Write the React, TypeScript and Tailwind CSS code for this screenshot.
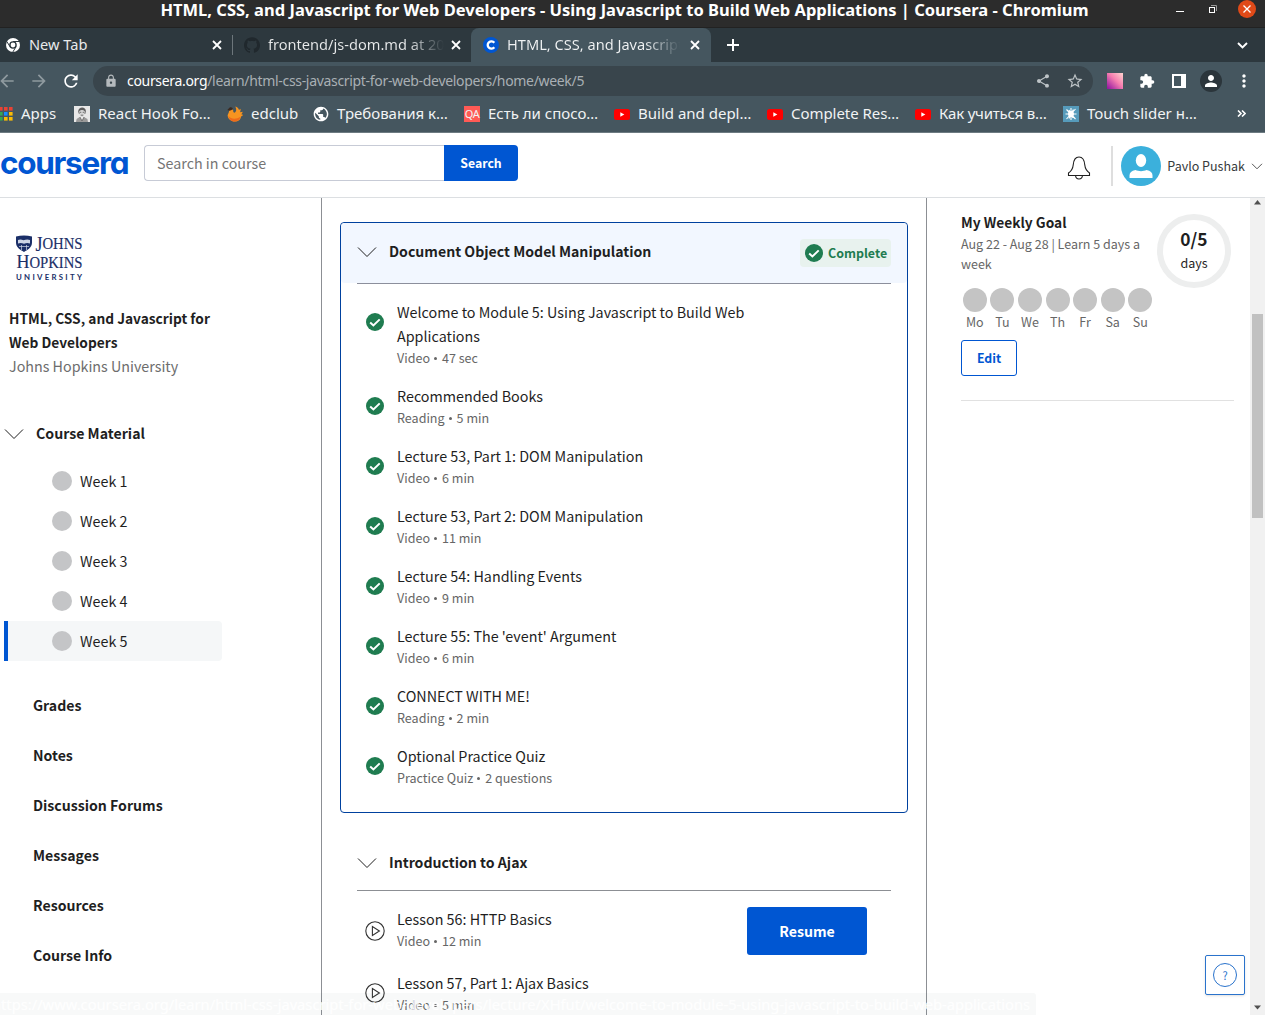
import type { ReactNode } from "react";
import { SiGithub } from "react-icons/si";
import {
  MdArrowBack,
  MdArrowForward,
  MdExtension,
  MdLock,
  MdMoreVert,
  MdPerson,
  MdPublic,
  MdRefresh,
  MdShare,
  MdStarOutline,
} from "react-icons/md";

const lessons = [
  { title: "Welcome to Module 5: Using Javascript to Build Web Applications", kind: "Video", length: "47 sec" },
  { title: "Recommended Books", kind: "Reading", length: "5 min" },
  { title: "Lecture 53, Part 1: DOM Manipulation", kind: "Video", length: "6 min" },
  { title: "Lecture 53, Part 2: DOM Manipulation", kind: "Video", length: "11 min" },
  { title: "Lecture 54: Handling Events", kind: "Video", length: "9 min" },
  { title: "Lecture 55: The 'event' Argument", kind: "Video", length: "6 min" },
  { title: "CONNECT WITH ME!", kind: "Reading", length: "2 min" },
  { title: "Optional Practice Quiz", kind: "Practice Quiz", length: "2 questions" },
];

const weeks = ["Week 1", "Week 2", "Week 3", "Week 4", "Week 5"];
const sections = ["Grades", "Notes", "Discussion Forums", "Messages", "Resources", "Course Info"];
const days = ["Mo", "Tu", "We", "Th", "Fr", "Sa", "Su"];

function CloseX() {
  return (
    <svg className="size-2.5 shrink-0" viewBox="0 0 10 10" stroke="#fff" strokeWidth="1.8">
      <path d="M1 1l8 8M9 1L1 9" />
    </svg>
  );
}

function Chevron({ className = "w-5 h-3" }: { className?: string }) {
  return (
    <svg className={`${className} shrink-0`} viewBox="0 0 20 12" fill="none" stroke="#1f1f1f" strokeWidth="1">
      <path d="M1 1.500l9 9 9-9" />
    </svg>
  );
}

function ChromeBall() {
  return (
    <svg className="size-[14px] shrink-0" viewBox="0 0 14 14">
      <circle cx="7" cy="7" r="7" fill="#fff" />
      <circle cx="7" cy="7" r="3.100" fill="#fff" stroke="#2d383e" strokeWidth="1.400" />
      <path d="M7 3.500h6.500M4 8.700L.8 3.500M10 8.800L6.800 14" stroke="#2d383e" strokeWidth="1" />
    </svg>
  );
}

function CheckBadge() {
  return (
    <svg className="size-[18px] shrink-0" viewBox="0 0 18 18">
      <circle cx="9" cy="9" r="9" fill="#1f7c50" />
      <path d="M4.2 9.4l3.2 3 6.3-6" fill="none" stroke="#fff" strokeWidth="2" />
    </svg>
  );
}

function PlayCircle() {
  return (
    <svg className="size-5 shrink-0" viewBox="0 0 20 20" fill="none" stroke="#333" strokeWidth="1.1">
      <circle cx="10" cy="10" r="9.2" />
      <path d="M7.4 5.5v9l7-4.5z" />
    </svg>
  );
}

function YouTube() {
  return (
    <svg className="h-[11px] w-4" viewBox="0 0 16 11">
      <rect width="16" height="11" rx="2.5" fill="#f00" />
      <path d="M6.3 3.2v4.6l4-2.3z" fill="#fff" />
    </svg>
  );
}

function AppsGrid() {
  const colors = ["#ea4335", "#ea4335", "#ea4335", "#34a853", "#1a8cff", "#fbbc04", "#34a853", "#fbbc04", "#fbbc04"];
  return (
    <svg className="h-[14px] w-[14px]" viewBox="0 0 14 14">
      {colors.map((c, i) => (
        <rect key={i} x={(i % 3) * 5} y={Math.floor(i / 3) * 5} width="3.6" height="3.6" fill={c} />
      ))}
    </svg>
  );
}

function Portrait() {
  return (
    <svg className="size-4" viewBox="0 0 16 16">
      <rect width="16" height="16" fill="#e8e8e8" />
      <path d="M4.300 6c-1-5.500 8-6.500 7.500-.5l-.6 2.500H5z" fill="#5c5c5c" />
      <path d="M5.200 5c2-1.500 4-1.500 5.600.3 0 3-1 5.700-2.800 5.700S5.200 8 5.200 5z" fill="#d8d8d8" />
      <path d="M2 16l.6-3 3-2 2.400 1.500 2-1.500 3.400 2 .6 3z" fill="#9a9a9a" />
      <path d="M5.800 6.300h1.500M8.700 6.300h1.500M6.800 9.200h2.400" stroke="#444" strokeWidth=".7" />
      <path d="M6 11l2 4 2-4" stroke="#555" fill="#eee" strokeWidth=".7" />
    </svg>
  );
}

function Phoenix() {
  return (
    <svg className="size-4" viewBox="0 0 16 16">
      <path
        d="M2 4.500L4.500 3c1.500 0 2 1.500 1.800 3l1 .7C9 6 10 4 8.300.5c2 .5 3.200 1.700 3.700 3.500l1.500-1.200c.2 1.500 0 2.500-.5 3.500l2.700-.6c-.3 1.300-.8 2-1.500 2.600l1.800.5c-.5 1-1.200 1.500-2 1.700 0 3-3 5-6 5-4 0-7-2.500-7.400-6C.8 7.500 2.500 6.500 2 4.500z"
        fill="#f79420"
      />
      <path d="M1.500 10c2.500 3.500 8 3.500 12 .8-.5 3-3.500 4.700-6 4.700-3 0-5.500-2-6-5.500z" fill="#ee6a1b" />
      <path d="M.3 4L3 1.300c1.400-.5 2.800.2 2.900 1.900L4 4.300l-1.500.5z" fill="#3b2a20" />
    </svg>
  );
}

function Splat() {
  return (
    <svg className="size-4" viewBox="0 0 16 16">
      <rect width="16" height="16" fill="#569bbb" />
      <circle cx="8" cy="8" r="3" fill="#fff" />
      <path
        d="M8 2v12M2.500 8h11M3.500 3.500l9 9.500M12.500 3l-9 10M6 4l4 8M10.400 3.500L6 12.500"
        stroke="#fff"
        strokeWidth="1.100"
      />
    </svg>
  );
}

function Bookmark({ icon, label, className = "" }: { icon: ReactNode; label: string; className?: string }) {
  return (
    <div className={`flex shrink-0 items-center gap-2 ${className}`}>
      <span className="flex translate-y-px">{icon}</span>
      <span>{label}</span>
    </div>
  );
}

function BrowserChrome() {
  return (
    <div className="shrink-0 font-['Noto_Sans',sans-serif] text-white">
      <div className="relative flex h-[28px] items-start justify-center border-b border-[#222] bg-[#2c2c2c]">
        <span className="-ml-4 whitespace-nowrap text-[16.5px] font-bold leading-[20px]">
          HTML, CSS, and Javascript for Web Developers - Using Javascript to Build Web Applications | Coursera - Chromium
        </span>
        <div className="absolute right-[9px] top-0 flex h-[18px] items-center gap-[25px]">
          <div className="mt-[5px] h-px w-2 bg-white" />
          <svg className="size-2" viewBox="0 0 8 8" fill="none">
            <path d="M2 .5h5.500V6" stroke="#999" />
            <rect x=".5" y="2.500" width="5" height="5" stroke="#fff" />
          </svg>
          <svg className="-ml-[4px] size-[18px]" viewBox="0 0 18 18">
            <circle cx="9" cy="9" r="9" fill="#e04a18" />
            <path d="M5.500 5.500l7 7M12.500 5.500l-7 7" stroke="#fff" strokeWidth="1.300" />
          </svg>
        </div>
      </div>

      <div className="flex h-[34px] items-center bg-[#2d383e] text-[14.6px] text-[#e8eaeb]">
        <div className="flex h-full w-[232px] items-center pl-[6px] pr-[10px]">
          <ChromeBall />
          <span className="ml-[9px] flex-1">New Tab</span>
          <CloseX />
        </div>
        <div className="h-5 w-px bg-[#6d767b]" />
        <div className="flex h-full w-[238px] items-center pl-[11px] pr-[10px]">
          <SiGithub className="size-4 shrink-0 text-[#20282d]" />
          <span className="ml-2 w-[176px] flex-1 overflow-hidden whitespace-nowrap bg-linear-to-r from-[#e8eaeb] from-80% to-[#2d383e] bg-clip-text text-transparent">
            frontend/js-dom.md at 20
          </span>
          <span className="ml-[7px] flex">
            <CloseX />
          </span>
        </div>
        <div className="flex h-full w-[240px] items-center rounded-t-lg bg-[#45565f] pl-[12px] pr-[11px]">
          <svg className="size-4 shrink-0" viewBox="0 0 16 16">
            <circle cx="8" cy="8" r="8" fill="#0056d2" />
            <path d="M11.300 5.700A3.700 3.700 0 1 0 11.300 10.300" fill="none" stroke="#fff" strokeWidth="2.300" />
          </svg>
          <span className="ml-2 flex-1 overflow-hidden whitespace-nowrap bg-linear-to-r from-[#f1f3f4] from-80% to-[#45565f] bg-clip-text text-transparent">
            HTML, CSS, and Javascript
          </span>
          <span className="ml-[10px] flex">
            <CloseX />
          </span>
        </div>
        <svg className="ml-4 size-3" viewBox="0 0 12 12" stroke="#fff" strokeWidth="2">
          <path d="M6 0v12M0 6h12" />
        </svg>
        <svg className="ml-auto mr-[17px] h-[7px] w-[11px]" viewBox="0 0 11 7" fill="none" stroke="#fff" strokeWidth="1.900">
          <path d="M1 1l4.500 4.500L10 1" />
        </svg>
      </div>

      <div className="flex h-[38px] items-center bg-[#45565f]">
        <MdArrowBack className="-ml-[3px] size-5 text-[#8f9a9f]" />
        <MdArrowForward className="ml-3 size-5 text-[#8f9a9f]" />
        <MdRefresh className="ml-3 size-5 text-white" />
        <div className="ml-[12px] flex h-[30px] w-[1000px] items-center rounded-full bg-[#39454c] pl-[11px] pr-[9px]">
          <MdLock className="size-[14px] text-[#b5babd]" />
          <span className="-mt-[2px] ml-[9px] text-[14px] tracking-[-0.32px] text-[#a9b0b4]">
            <span className="text-white">coursera.org</span>/learn/html-css-javascript-for-web-developers/home/week/5
          </span>
          <MdShare className="ml-auto size-4 text-[#bdc3c6]" />
          <MdStarOutline className="ml-[15px] size-[18px] text-[#bdc3c6]" />
        </div>
        <div className="ml-[14px] size-4 bg-[linear-gradient(45deg,#8d10a0,#f77fb0_55%,#ffd5cf)]" />
        <MdExtension className="ml-4 size-4 text-white" />
        <svg className="ml-[17px] size-[14px]" viewBox="0 0 14 14">
          <path d="M0 0h14v14H0zM2 2v10h7V2z" fill="#fff" fillRule="evenodd" />
        </svg>
        <div className="ml-[14px] flex size-[22px] items-center justify-center rounded-full bg-[#2b353b]">
          <MdPerson className="size-[18px] text-white" />
        </div>
        <MdMoreVert className="ml-[12px] size-5 text-white" />
      </div>

      <div className="flex h-[33px] items-center overflow-hidden border-b border-[#6d7b82] bg-[#45565f] pb-[6px] text-[15px] text-[#f1f3f4]">
        <Bookmark className="w-[74px]" icon={<span className="-ml-px flex"><AppsGrid /></span>} label="Apps" />
        <Bookmark className="w-[153px]" icon={<Portrait />} label="React Hook Fo…" />
        <Bookmark className="w-[86px]" icon={<Phoenix />} label="edclub" />
        <Bookmark className="w-[151px]" icon={<MdPublic className="size-4 scale-110 text-white" />} label="Требования к…" />
        <Bookmark
          className="w-[150px]"
          icon={<span className="w-4 bg-[#ff5a55] text-center text-[11px] leading-4 tracking-tighter">QA</span>}
          label="Есть ли спосо…"
        />
        <Bookmark className="w-[153px]" icon={<YouTube />} label="Build and depl…" />
        <Bookmark className="w-[148px] tracking-[-0.05px]" icon={<YouTube />} label="Complete Res…" />
        <Bookmark className="w-[148px] tracking-[-0.2px]" icon={<YouTube />} label="Как учиться в…" />
        <Bookmark className="w-[170px]" icon={<Splat />} label="Touch slider н…" />
        <svg className="ml-[4px] h-[7px] w-[9px]" viewBox="0 0 9 7" fill="none" stroke="#fff" strokeWidth="1.600">
          <path d="M1 .5l3 3-3 3M5 .5l3 3-3 3" />
        </svg>
      </div>
    </div>
  );
}

function SiteHeader() {
  return (
    <header className="flex h-[65px] shrink-0 items-center border-b border-[#dcdfe2] bg-white">
      <span className="-mt-[5px] w-[144px] whitespace-nowrap font-[Inter] text-[31.5px] font-bold leading-none tracking-[-1.3px] text-[#0056d2] [font-feature-settings:'cv11']">
        coursera
      </span>
      <div className="-mt-1 flex h-9 w-[374px]">
        <div className="flex flex-1 items-center rounded-l border border-r-0 border-[#c7cbd6] pl-3 text-[14.3px] text-[#757575]">
          Search in course
        </div>
        <button className="w-[74px] rounded-r bg-[#0056d2] text-[12.3px] font-bold text-white">Search</button>
      </div>
      <svg className="ml-auto mt-[5px] h-6 w-6" viewBox="0 0 24 24" fill="none" stroke="#1f1f1f" strokeWidth="1.100">
        <path d="M1.500 19.500v-2.500c3-2 4.300-4 4.700-8 .4-5 2-8 5.800-8s5.400 3 5.800 8c.4 4 1.700 6 4.700 8v2.500zM8.500 19.500c.5 4.600 6.500 4.600 7 0" />
      </svg>
      <div className="ml-5 mr-2 mt-[2px] h-10 w-[2px] bg-[#dedede]" />
      <svg className="mt-[2px] size-10" viewBox="0 0 40 40">
        <circle cx="20" cy="20" r="20" fill="#3bb0dc" />
        <ellipse cx="20" cy="14.500" rx="5.200" ry="6.500" fill="#fff" />
        <path d="M8.500 32v-2.500c0-3 2-4.500 6-5.500 3 1.500 8 1.500 11 0 4 1 6 2.500 6 5.500V32z" fill="#fff" />
      </svg>
      <span className="ml-[6px] mt-[2px] whitespace-nowrap text-[12.5px] text-[#373a3c]">Pavlo Pushak</span>
      <svg className="ml-[6px] mr-[2px] mt-[3px] h-[7px] w-3 shrink-0" viewBox="0 0 12 7" fill="none" stroke="#444" strokeWidth="0.900">
        <path d="M1 .8l5 5 5-5" />
      </svg>
    </header>
  );
}

function CourseNav() {
  return (
    <aside className="flex w-[322px] shrink-0 flex-col border-r border-[#8c8f94] bg-white">
      <svg className="ml-[15px] mt-9 h-12 w-[70px]" viewBox="0 0 70 48" fill="#1b2f68">
        <path d="M1 2.500q8-2 16 0v6c0 5-4 7-8 9.500-4-2.500-8-4.500-8-9.500z" />
        <path d="M3 6q2.500-1 5.500.3Q12 5 15 6v3.500q-3-1-6 .3-3-1.300-6-.3z" fill="#cdd5e6" />
        <path d="M4 12.500h10M6.500 11v5M11.500 11v5" stroke="#cdd5e6" strokeWidth=".7" />
        <g fontFamily="Liberation Serif, serif" stroke="#1b2f68" strokeWidth=".15">
          <text x="20.500" y="17" fontSize="20" textLength="7" lengthAdjust="spacingAndGlyphs">J</text>
          <text x="27.500" y="15" fontSize="16" textLength="40" lengthAdjust="spacingAndGlyphs">OHNS</text>
          <text x="1.500" y="34" fontSize="19.500" textLength="13" lengthAdjust="spacingAndGlyphs">H</text>
          <text x="14.500" y="34" fontSize="16" textLength="53" lengthAdjust="spacingAndGlyphs">OPKINS</text>
        </g>
        <text x="1" y="45.700" fontFamily="Lato, sans-serif" fontWeight="700" fontSize="7.800" textLength="66">UNIVERSITY</text>
      </svg>
      <div className="ml-[9px] mt-[24px] w-[215px] leading-6">
        <h1 className="text-[13.74px] font-semibold">HTML, CSS, and Javascript for Web Developers</h1>
        <p className="text-[14.3px] text-[#6d6d6d]">Johns Hopkins University</p>
      </div>
      <div className="mt-[44px] flex h-6 items-center gap-3 pl-1">
        <Chevron />
        <span className="text-[14.15px] font-bold">Course Material</span>
      </div>
      <ul className="ml-1 mt-[15px] w-[218px] text-[14.3px]">
        {weeks.map((week) => (
          <li
            key={week}
            className={
              week === "Week 5"
                ? "flex h-10 items-center gap-2 rounded-r border-l-4 border-[#0056d2] bg-[#f5f7f8] pl-11"
                : "flex h-10 items-center gap-2 pl-12"
            }
          >
            <span className="size-5 rounded-full bg-[#c4c5c7]" />
            {week}
          </li>
        ))}
      </ul>
      <ul className="ml-[33px] mt-5 text-[14.12px] font-bold">
        {sections.map((section) => (
          <li key={section} className="flex h-[50px] items-center">
            {section}
          </li>
        ))}
      </ul>
    </aside>
  );
}

function Meta({ kind, length }: { kind: string; length: string }) {
  return (
    <div className="flex h-5 items-center text-[12.55px] text-[#666]">
      {kind}
      <span className="ml-[4px] mr-[5px] mt-px size-[3px] rounded-full bg-[#666]" />
      {length}
    </div>
  );
}

function SectionTitle({ children }: { children: string }) {
  return (
    <div className="flex items-center gap-3">
      <span className="flex translate-y-px">
        <Chevron />
      </span>
      <h2 className="text-[14.12px] font-bold leading-6">{children}</h2>
    </div>
  );
}

function Lessons() {
  return (
    <main className="flex w-[605px] shrink-0 flex-col border-r border-[#8c8f94] bg-white pl-[18px] pr-[18px] pt-6">
      <section className="h-[591px] shrink-0 rounded border border-[#00419e]">
        <div className="flex h-[60px] items-center justify-between rounded bg-[#f2f7ff] px-4">
          <div className="-mt-[4px]">
            <SectionTitle>Document Object Model Manipulation</SectionTitle>
          </div>
          <div className="flex h-7 w-[91px] items-center gap-[5px] rounded bg-[#e8f2ee] pl-[5px] text-[12.45px] font-bold text-[#1f7c50]">
            <CheckBadge />
            Complete
          </div>
        </div>
        <div className="mx-4 h-px bg-[#8c8f9c]" />
        <ul className="flex flex-col gap-4 pl-[25px] pt-4">
          {lessons.map((l) => (
            <li key={l.title} className="flex gap-[13px]">
              <span className="mt-[13px]">
                <CheckBadge />
              </span>
              <div className="w-[370px]">
                <div className="text-[14.33px] leading-6">{l.title}</div>
                <Meta kind={l.kind} length={l.length} />
              </div>
            </li>
          ))}
        </ul>
      </section>
      <section className="mx-[17px] mt-[37px]">
        <SectionTitle>Introduction to Ajax</SectionTitle>
        <div className="mt-4 h-px bg-[#8c8f94]" />
        <ul className="pl-2 pt-4">
          <li className="flex h-16">
            <span className="mr-3 mt-[14px]">
              <PlayCircle />
            </span>
            <div className="flex-1">
              <div className="text-[14.33px] leading-6">Lesson 56: HTTP Basics</div>
              <Meta kind="Video" length="12 min" />
            </div>
            <button className="mr-6 h-12 w-[120px] rounded-[3px] bg-[#0056d2] pt-[2px] text-[14.15px] font-bold text-white">Resume</button>
          </li>
          <li className="flex">
            <span className="mr-3 mt-3">
              <PlayCircle />
            </span>
            <div>
              <div className="text-[14.33px] leading-6">Lesson 57, Part 1: Ajax Basics</div>
              <Meta kind="Video" length="5 min" />
            </div>
          </li>
        </ul>
      </section>
    </main>
  );
}

function GoalPanel() {
  return (
    <aside className="relative flex min-w-0 flex-1 flex-col bg-white pl-[34px] pr-4">
      <div className="flex justify-between border-b border-[#e1e1e1] pb-6 pt-[14px]">
        <div className="w-[194px]">
          <h3 className="text-[13.74px] font-semibold leading-5">My Weekly Goal</h3>
          <p className="mt-[2px] text-[12.5px] leading-5 text-[#666]">Aug 22 - Aug 28 | Learn 5 days a week</p>
          <div className="mt-[14px] flex w-[193px]">
            {days.map((d) => (
              <div key={d} className="flex flex-1 flex-col items-center text-[12.5px] leading-5 text-[#666]">
                <span className="size-6 rounded-full bg-[#c4c4c4]" />
                {d}
              </div>
            ))}
          </div>
          <button className="mt-[8px] block h-9 w-14 rounded-[3px] border border-[#0056d2] text-[12.3px] font-bold text-[#0056d2]">
            Edit
          </button>
        </div>
        <div className="mr-[3px] mt-[2px] flex size-[74px] shrink-0 flex-col items-center justify-center rounded-full border-[6px] border-[#edeeee] leading-6">
          <span className="text-[17.4px] font-semibold">0/5</span>
          <span className="text-[12.5px]">days</span>
        </div>
      </div>
      <button className="absolute bottom-5 right-[5px] flex size-10 items-center justify-center rounded-[2px] border border-[#2a73cc] bg-white shadow-sm">
        <span className="flex size-6 items-center justify-center rounded-full border border-[#2a73cc] text-[11px] leading-none text-[#2a73cc]">
          ?
        </span>
      </button>
    </aside>
  );
}

function Scrollbar() {
  return (
    <div className="flex w-[15px] shrink-0 flex-col items-center bg-[#f1f1f1]">
      <svg className="mt-[2px] h-[5px] w-[7px]" viewBox="0 0 7 5">
        <path d="M0 4.500L3.500 0 7 4.500z" fill="#505050" />
      </svg>
      <div className="mt-[109px] h-[204px] w-[11px] bg-[#c1c1c1]" />
      <svg className="mb-[5px] mt-auto h-[5px] w-[7px]" viewBox="0 0 7 5">
        <path d="M0 .5h7L3.500 4.500z" fill="#505050" />
      </svg>
    </div>
  );
}

export default function App() {
  return (
    <div className="relative flex h-[1015px] w-[1265px] flex-col overflow-hidden bg-white font-['Noto_Sans_CJK_SC',sans-serif] text-[#1f1f1f]">
      <BrowserChrome />
      <SiteHeader />
      <div className="flex min-h-0 flex-1 overflow-hidden">
        <CourseNav />
        <Lessons />
        <GoalPanel />
        <Scrollbar />
      </div>
      <div className="absolute bottom-0 left-0 flex h-[22px] w-[1036px] items-center justify-end overflow-hidden rounded-tr-[3px] bg-[#45605a]/4 pr-[6px] font-['Noto_Sans',sans-serif] text-[14.7px] text-white/90">
        <span className="whitespace-nowrap">
          https://www.coursera.org/learn/html-css-javascript-for-web-developers/lecture/XHfut/welcome-to-module-5-using-javascript-to-build-web-applications
        </span>
      </div>
    </div>
  );
}
